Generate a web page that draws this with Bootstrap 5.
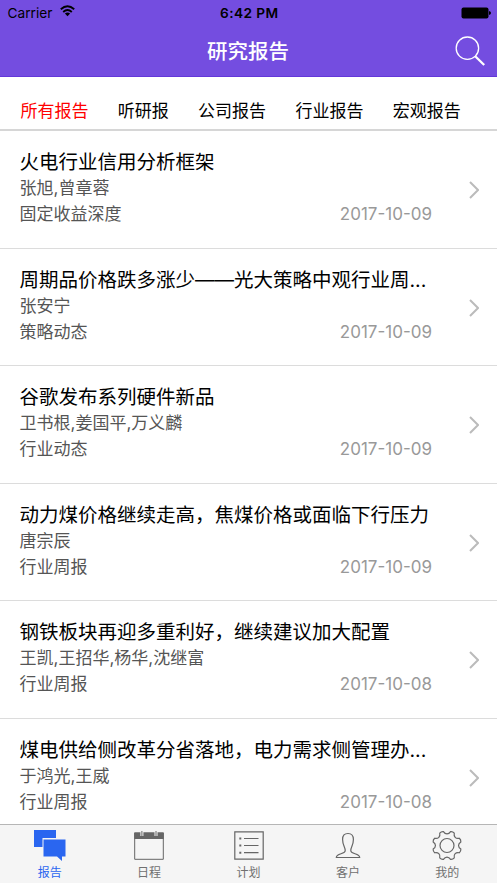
<!DOCTYPE html>
<html lang="zh-CN">
<head>
<meta charset="utf-8">
<meta name="viewport" content="width=device-width, initial-scale=1">
<title>研究报告</title>
<link href="https://cdn.jsdelivr.net/npm/bootstrap@5.3.0/dist/css/bootstrap.min.css" rel="stylesheet">
<style>
body{font-family:Inter,"Noto Sans CJK SC",sans-serif;color:#000;background:#fff}
.app{height:883px}
.top{background:#744de0;height:77px;border-bottom:1px solid #6338d9}
.status{height:26px;font-size:13.7px;line-height:26px;padding:0 6px 0 7.5px}
.side{flex:1 1 0}
.clock{font-weight:600;letter-spacing:.4px}
.heading{height:50px;line-height:52px;font-size:20.5px;font-weight:500;color:#fff;padding:0 11px 0 10px}
.tabs{height:54px;border-bottom:2px solid #d6d6d6;padding:17px 0 0 20.5px;gap:29.3px;font-size:17px;line-height:34px;white-space:nowrap}
.tabs .on{color:#f00}
.report{height:117.5px;border-bottom:1.5px solid #dcdcdc;padding:18px 18px 0 19.5px}
.name{font-size:19.5px;line-height:27px;width:412.5px;white-space:nowrap}
.meta{font-size:17px;line-height:26px;color:#555;width:412.5px}
.name+.meta{margin-top:-1px}
.date{color:#999}
.arrow{margin-top:31px}
.foot{height:59px;background:#f5f5f5;border-top:1px solid #b6b6b6;font-size:12px;line-height:16px;color:#707070;padding-top:4px}
.foot svg{display:block;margin:0 auto 4px;color:#666}
.foot .on,.foot .on svg{color:#2a66f0}
</style>
<script src="https://cdn.jsdelivr.net/npm/bootstrap@5.3.0/dist/js/bootstrap.bundle.min.js"></script>
</head>
<body>
<div class="app d-flex flex-column overflow-hidden">
<header class="top flex-shrink-0">
<div class="status d-flex">
<div class="side d-flex align-items-center"><span>Carrier</span>
<svg class="ms-2 mb-1" width="15" height="12" viewBox="0 0 15 12" fill="none" stroke="#000" stroke-width="1.9"><path d="M.8 4.3Q7.5-1.7 14.2 4.3M3.2 7Q7.5 3.2 11.8 7"/><path d="M4.9 8.5Q7.5 6.6 10.1 8.5L7.5 11.3Z" fill="#000" stroke="none"/></svg></div>
<div class="clock">6:42 PM</div>
<div class="side d-flex align-items-center justify-content-end"><svg width="30" height="12" viewBox="0 0 30 12"><rect x=".5" y=".5" width="27" height="11" rx="2"/><path d="M28 4Q30 4.3 30 6T28 8Z"/></svg></div>
</div>
<div class="heading d-flex"><div class="side"></div><div>研究报告</div><div class="side d-flex justify-content-end align-items-center">
<svg width="31" height="31" viewBox="0 0 31 31" fill="none" stroke="#fff"><circle cx="12.4" cy="12.2" r="11.2" stroke-width="1.3"/><path d="M20.2 20.2 29.2 29" stroke-width="2.3"/></svg></div></div>
</header>
<nav class="tabs d-flex flex-shrink-0"><span class="on">所有报告</span><span>听研报</span><span>公司报告</span><span>行业报告</span><span>宏观报告</span></nav>
<main id="list" class="flex-grow-1 overflow-hidden"></main>
<footer class="foot d-flex text-center flex-shrink-0">
<div class="col on"><svg width="34" height="32" viewBox="0 0 34 32"><path d="M1 1H23V9H9.5V18H1Z" fill="currentColor"/><path d="M10.5 10.5H32.5V27.5H29V32L24 27.5H10.5Z" fill="currentColor"/></svg>报告</div>
<div class="col"><svg width="34" height="32" viewBox="0 0 34 32" fill="none" stroke="currentColor"><path d="M2.7 4V30.3H31.3V4Z"/><path d="M2.2 3.5H31.8V10H2.2Z" fill="currentColor" stroke="none"/><path d="M9.9 2V7M24 2V7" stroke="#f5f5f5" stroke-width="3"/><path d="M9.9 2V7M24 2V7"/></svg>日程</div>
<div class="col"><svg width="34" height="32" viewBox="0 0 34 32" fill="none" stroke="currentColor" stroke-width="1.2"><path d="M2.8 2.8H31.2V30.2H2.8Z"/><path d="M12 9.5H26.5M12 16.5H26.5M12 23.7H26.5"/><path d="M7.3 9.5H9.3M7.3 16.5H9.3M7.3 23.7H9.3" stroke-width="2"/></svg>计划</div>
<div class="col"><svg width="34" height="32" viewBox="0 0 34 32" fill="none" stroke="currentColor" stroke-width="1.2"><path d="M5.3 28.5C5.5 24 14.2 25.5 14.2 21.5C14.2 18 11.6 16.5 11.6 10.5Q11.6 4.5 17 4.5T22.4 10.5C22.4 16.5 19.8 18 19.8 21.5C19.8 25.5 28.5 24 28.7 28.5Z"/></svg>客户</div>
<div class="col"><svg width="34" height="32" viewBox="0 0 34 32" fill="none" stroke="currentColor" stroke-width="1.2"><circle cx="17" cy="16.5" r="7"/><path id="gear"/></svg>我的</div>
</footer>
</div>
<script>
const reports=[
["火电行业信用分析框架","张旭,曾章蓉","固定收益深度","2017-10-09"],
["周期品价格跌多涨少——光大策略中观行业周...","张安宁","策略动态","2017-10-09"],
["谷歌发布系列硬件新品","卫书根,姜国平,万义麟","行业动态","2017-10-09"],
["动力煤价格继续走高，焦煤价格或面临下行压力","唐宗辰","行业周报","2017-10-09"],
["钢铁板块再迎多重利好，继续建议加大配置","王凯,王招华,杨华,沈继富","行业周报","2017-10-08"],
["煤电供给侧改革分省落地，电力需求侧管理办...","于鸿光,王威","行业周报","2017-10-08"]];
document.getElementById("list").innerHTML=reports.map(r=>`<article class="report d-flex justify-content-between"><div><div class="name">${r[0]}</div><div class="meta">${r[1]}</div><div class="meta d-flex justify-content-between"><span>${r[2]}</span><span class="date">${r[3]}</span></div></div><svg class="arrow" width="10" height="20" viewBox="0 0 10 20" fill="none" stroke="#bbb" stroke-width="2"><path d="M1 2 9 10 1 18"/></svg></article>`).join("");
// Gear outline: eight rounded teeth separated by round notches
const at=(r,a)=>(17+r*Math.cos(a*Math.PI/180)).toFixed(2)+" "+(16.5+r*Math.sin(a*Math.PI/180)).toFixed(2);
let d="";
for(let a=22.5;a<382;a+=45)d+=(d?"L":"M")+at(14.3,a-8)+"Q"+at(15.2,a)+" "+at(14.3,a+8)+"C"+at(10.9,a+14)+" "+at(10.9,a+31)+" "+at(14.3,a+37);
document.getElementById("gear").setAttribute("d",d+"Z");
</script>
</body>
</html>
